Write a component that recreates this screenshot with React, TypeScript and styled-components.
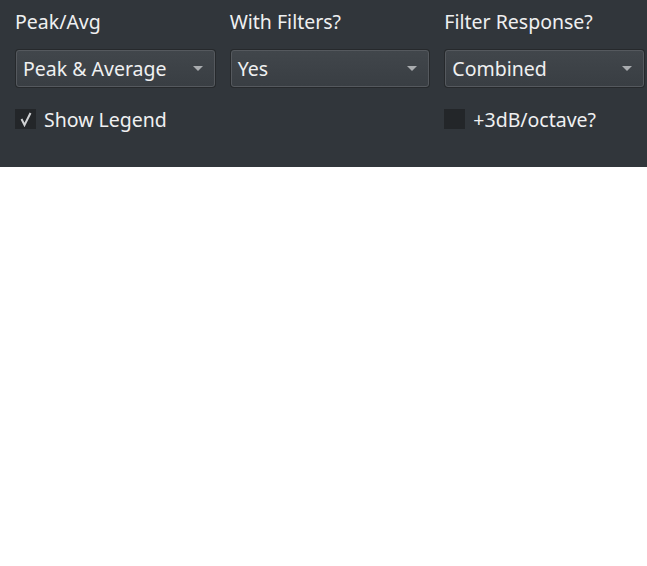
import React from "react";
import styled, { createGlobalStyle } from "styled-components";

const GlobalStyle = createGlobalStyle`
    body {
        margin: 0;
        background: #ffffff;
        font-family: "Noto Sans", "DejaVu Sans", sans-serif;
    }
`;

const Panel = styled.div`
    background: #31363b;
    height: 167px;
    box-sizing: border-box;
    padding: 7px 3px 0 16px;
    display: grid;
    grid-template-columns: repeat(3, 1fr);
    column-gap: 16px;
    align-content: start;
`;

const Column = styled.div`
    display: flex;
    flex-direction: column;
`;

const Label = styled.div`
    color: #eff0f1;
    font-size: 19.5px;
    line-height: 30px;
    height: 30px;
    margin-left: -1px;
    margin-bottom: 13px;
`;

const Combo = styled.div`
    height: 37px;
    box-sizing: border-box;
    border: 1px solid #55595e;
    border-radius: 3px;
    background: linear-gradient(#41464b, #393e43);
    box-shadow: 0 0 0 1px #26292c;
    display: flex;
    align-items: center;
    justify-content: space-between;
    padding: 0 11px 0 6px;
    color: #eff0f1;
    font-size: 19.5px;
`;

const Arrow = styled.span`
    width: 0;
    height: 0;
    border-left: 5.5px solid transparent;
    border-right: 5.5px solid transparent;
    border-top: 5.5px solid #a9acaf;
`;

const CheckRow = styled.div`
    display: flex;
    align-items: center;
    gap: 8px;
    margin-top: 22px;
    margin-left: -1px;
    height: 20px;
    color: #eff0f1;
    font-size: 19.5px;
`;

const Box = styled.span`
    width: 21px;
    height: 20px;
    background: #232629;
    display: flex;
    align-items: center;
    justify-content: center;
`;

const Check = () => (
    <svg width="14" height="16" viewBox="0 0 14 16">
        <path d="M2.5 8 L5.5 14 L11.5 2" fill="none" stroke="#cfd1d3" strokeWidth="2" />
    </svg>
);

type FieldProps = {
    label: string;
    value: string;
    check?: { text: string; checked: boolean };
};

const Field = ({ label, value, check }: FieldProps) => (
    <Column>
        <Label>{label}</Label>
        <Combo>
            <span>{value}</span>
            <Arrow />
        </Combo>
        {check && (
            <CheckRow>
                <Box>{check.checked && <Check />}</Box>
                <span>{check.text}</span>
            </CheckRow>
        )}
    </Column>
);

export default function App() {
    return (
        <>
            <GlobalStyle />
            <Panel>
                <Field
                    label="Peak/Avg"
                    value="Peak & Average"
                    check={{ text: "Show Legend", checked: true }}
                />
                <Field label="With Filters?" value="Yes" />
                <Field
                    label="Filter Response?"
                    value="Combined"
                    check={{ text: "+3dB/octave?", checked: false }}
                />
            </Panel>
        </>
    );
}
